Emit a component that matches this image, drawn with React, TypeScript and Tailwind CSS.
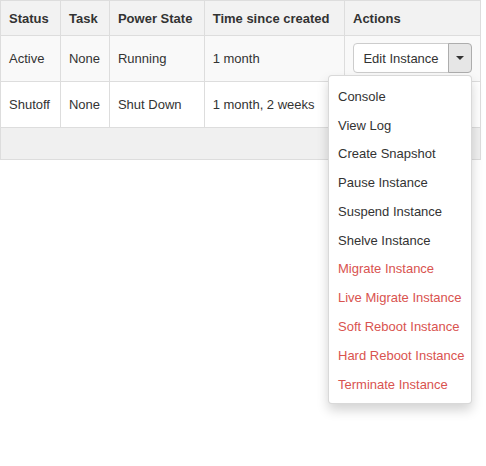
import React from "react";

const rows = [
  { status: "Active", task: "None", power: "Running", age: "1 month", bg: "bg-[#f9f9f9]", open: true },
  { status: "Shutoff", task: "None", power: "Shut Down", age: "1 month, 2 weeks", bg: "bg-white", open: false },
];

const menuItems: { label: string; danger?: boolean }[] = [
  { label: "Console" },
  { label: "View Log" },
  { label: "Create Snapshot" },
  { label: "Pause Instance" },
  { label: "Suspend Instance" },
  { label: "Shelve Instance" },
  { label: "Migrate Instance", danger: true },
  { label: "Live Migrate Instance", danger: true },
  { label: "Soft Reboot Instance", danger: true },
  { label: "Hard Reboot Instance", danger: true },
  { label: "Terminate Instance", danger: true },
];

function ActionButton({ open }: { open: boolean }) {
  return (
    <div className="relative flex h-[30px]">
      <button className="h-[30px] w-[96px] rounded-l-[4px] border border-[#cccccc] bg-white pt-px text-[13px] text-[#333333]">
        Edit Instance
      </button>
      <button
        className={`-ml-px flex h-[30px] w-[24px] items-center justify-center rounded-r-[4px] border ${
          open ? "border-[#adadad] bg-[#e6e6e6]" : "border-[#cccccc] bg-white"
        }`}
      >
        <span className="h-0 w-0 border-x-[4px] border-t-[4px] border-x-transparent border-t-[#333333]" />
      </button>
      {open && (
        <ul className="absolute right-0 top-full z-10 mt-[2px] w-[144px] rounded-[4px] border border-[rgba(0,0,0,0.15)] bg-white pt-[6px] pb-[4px] shadow-[0_6px_12px_rgba(0,0,0,0.175)]">
          {menuItems.map((item) => (
            <li
              key={item.label}
              className={`flex h-[28.8px] items-center whitespace-nowrap pl-[9px] text-[13px] ${
                item.danger ? "text-[#d9534f]" : "text-[#333333]"
              }`}
            >
              {item.label}
            </li>
          ))}
        </ul>
      )}
    </div>
  );
}

export default function App() {
  const th = "border border-[#dddddd] px-2 pt-[8.5px] pb-[6.5px] text-left align-middle font-bold leading-[18.57px]";
  const td = "border border-[#dddddd] px-2 pt-[9px] pb-[6px] align-middle leading-[18.57px]";
  const tdBtn = "border border-[#dddddd] px-2 py-[7.5px] align-middle";
  return (
    <div className="min-h-[466px] bg-white font-['Liberation_Sans',Arial,sans-serif] text-[13px] text-[#333333]">
      <table className="w-[481px] border-collapse">
        <thead>
          <tr className="bg-[#f2f2f2]">
            <th className={`${th} w-[60px]`}>Status</th>
            <th className={`${th} w-[49px]`}>Task</th>
            <th className={`${th} w-[95px]`}>Power State</th>
            <th className={`${th} w-[141px]`}>Time since created</th>
            <th className={th}>Actions</th>
          </tr>
        </thead>
        <tbody>
          {rows.map((r) => (
            <tr key={r.status} className={r.bg}>
              <td className={td}>{r.status}</td>
              <td className={td}>{r.task}</td>
              <td className={td}>{r.power}</td>
              <td className={td}>{r.age}</td>
              <td className={tdBtn}>
                <ActionButton open={r.open} />
              </td>
            </tr>
          ))}
        </tbody>
        <tfoot>
          <tr className="bg-[#f0f0f0]">
            <td colSpan={5} className="h-[32px] border border-[#dddddd]" />
          </tr>
        </tfoot>
      </table>
    </div>
  );
}
